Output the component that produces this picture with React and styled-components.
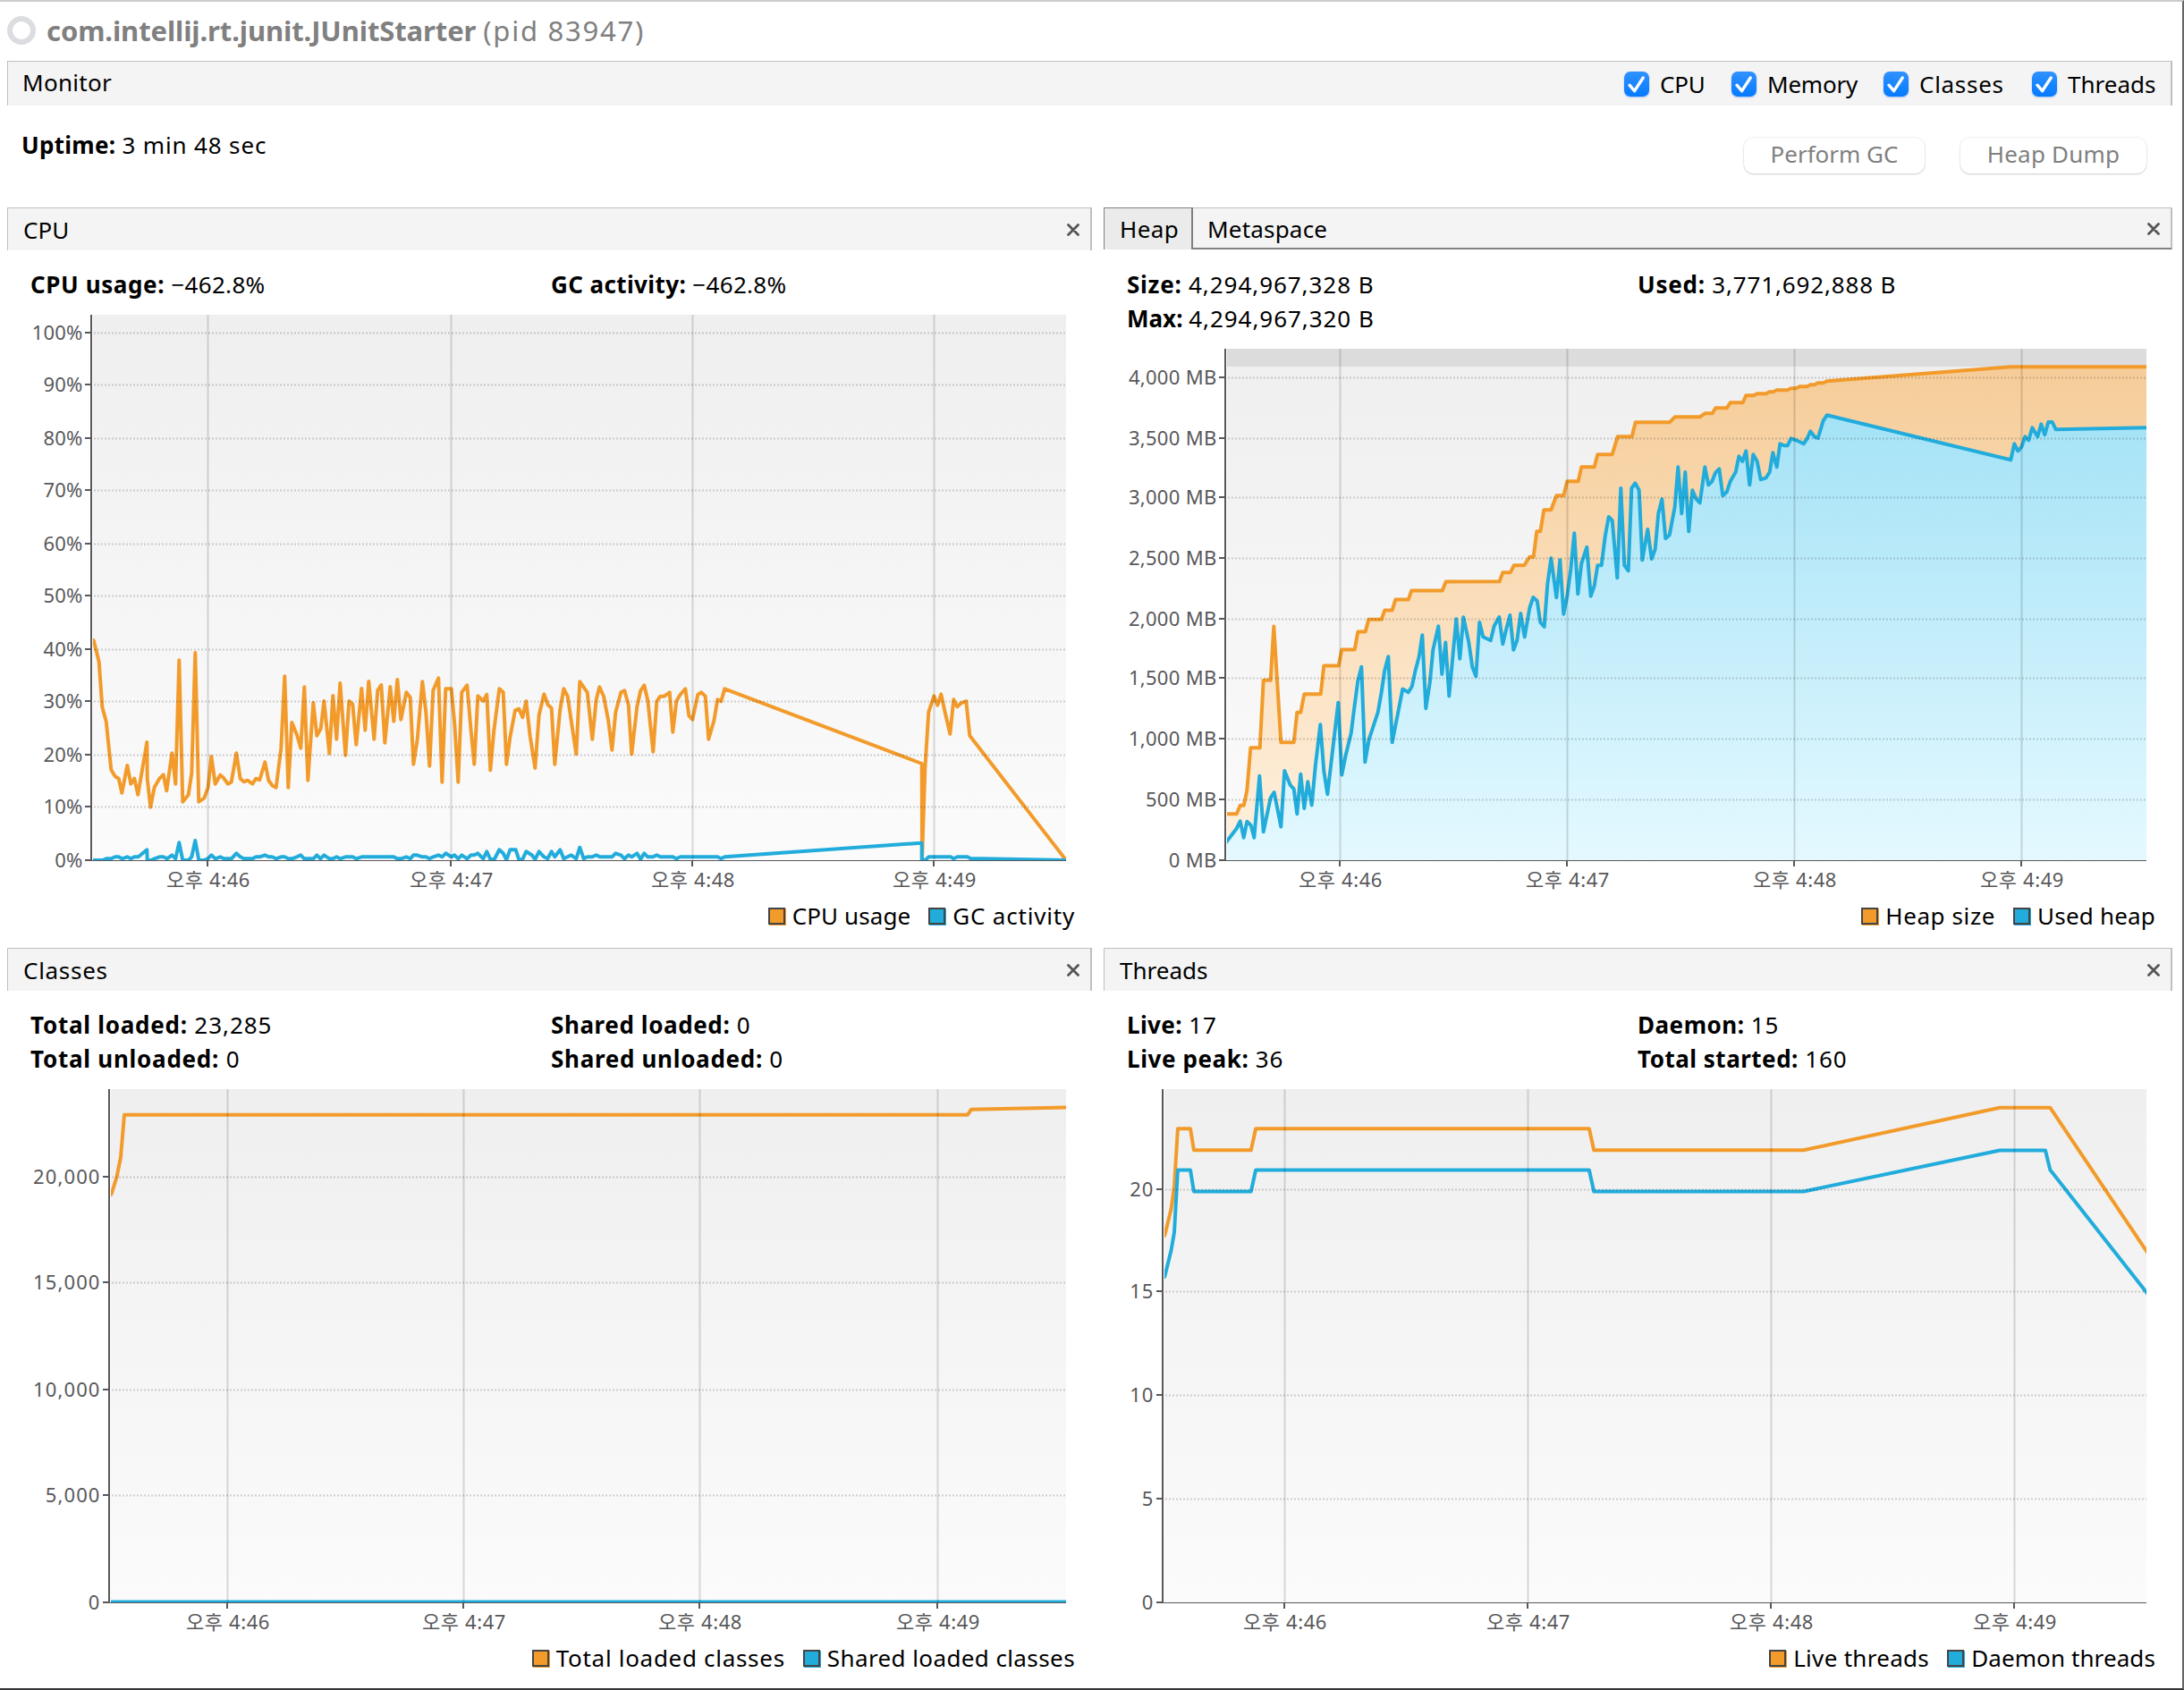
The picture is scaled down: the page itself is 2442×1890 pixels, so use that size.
import React from 'react'
import styled, { createGlobalStyle } from 'styled-components'

const ORANGE = '#f29b2b'
const BLUE = '#22acdb'

const GlobalStyle = createGlobalStyle`
  * {
    box-sizing: border-box;
  }

  body {
    margin: 0;
    background: #ffffff;
    color: #000000;
    font-family: 'Noto Sans', 'Noto Sans CJK KR', sans-serif;
    font-size: 26px;
  }
`

const Window = styled.div`
  width: 2442px;
  height: 1890px;
  overflow: hidden;
  border-top: 2px solid #cccccc;
  border-right: 2px solid #666666;
  border-bottom: 2px solid #333335;
  padding-left: 8px;
`

const Text = styled.span`
  letter-spacing: ${props => props.$track || 0}px;
  font-weight: ${props => (props.$bold ? 700 : 400)};
  white-space: pre;
`

const TitleBar = styled.header`
  display: flex;
  align-items: center;
  height: 66px;
  padding-bottom: 2px;
  color: #808080;
  font-size: 31px;
`

const StatusRing = styled.div`
  width: 32px;
  height: 32px;
  margin-right: 12px;
  border: 6px solid #dcdde1;
  border-radius: 50%;
`

const MonitorBar = styled.div`
  display: flex;
  justify-content: space-between;
  align-items: center;
  width: 2421px;
  height: 50px;
  padding: 0 17px 0 16px;
  border: solid #bfbfbf;
  border-width: 1px 2px 0 1px;
  background: #f4f4f4;
`

const MonitorTitle = styled.div`
  padding-bottom: 3px;
`

const CheckGroup = styled.div`
  display: flex;
`

const CheckLabel = styled.label`
  display: flex;
  align-items: center;
  width: ${props => props.$width}px;
`

const CheckBox = styled.span`
  display: flex;
  width: 28px;
  height: 28px;
  margin-right: 12px;
  border-radius: 7px;
  background: linear-gradient(#2f92ff, #057aff);
  box-shadow: 0 1px 2px rgba(0, 90, 220, 0.35);
`

const Overview = styled.div`
  display: flex;
  justify-content: space-between;
  width: 2392px;
  height: 114px;
  padding-left: 16px;
`

const Uptime = styled.div`
  padding-top: 25px;
  line-height: 38px;
`

const Buttons = styled.div`
  display: flex;
  gap: 40px;
  padding-top: 36px;
`

const Button = styled.button`
  width: ${props => props.$width}px;
  height: 40px;
  padding: 0 0 4px;
  border: 0;
  border-radius: 11px;
  background: #ffffff;
  box-shadow: 0 0 1px 1px rgba(0, 0, 0, 0.05), 0 1px 2px rgba(0, 0, 0, 0.16);
  color: #808080;
  font: inherit;
  line-height: 36px;
`

const Panels = styled.main`
  display: grid;
  grid-template-columns: 1213px 1195px;
  grid-template-rows: 828px 828px;
  column-gap: 13px;
`

const PanelBox = styled.section`
  display: flex;
  flex-direction: column;
`

const PanelHead = styled.div`
  display: flex;
  height: ${props => (props.$tabs ? 47 : 48)}px;
  margin-bottom: ${props => (props.$tabs ? 1 : 0)}px;
  background: #f4f4f4;
`

const Tab = styled.div`
  display: flex;
  align-items: center;
  width: ${props => props.$width}px;
  padding: 0 0 0 17px;
  border: solid #808080;
  border-width: 1px 2px 0 1px;
  background: #ebebeb;
`

const HeadBar = styled.div`
  display: flex;
  flex: 1;
  justify-content: space-between;
  align-items: center;
  padding: ${props => (props.$tabs ? '2px 12px 0 16px' : '0 12px 0 17px')};
  border: solid #bfbfbf;
  border-width: 1px 2px 0 1px;
  ${props => props.$tabs && `
    border-left: 0;
    border-bottom: 2px solid #808080;
  `}
`

const Info = styled.div`
  display: grid;
  grid-template-columns: ${props => props.$column}px auto;
  align-content: start;
  height: ${props => props.$height}px;
  padding: 19px 0 0 26px;
  line-height: 38px;
`

const Plot = styled.svg`
  display: block;
`

const Legend = styled.div`
  display: flex;
  justify-content: flex-end;
  gap: 20px;
  padding: 4px 19px 0 0;
  line-height: 36px;
`

const LegendItem = styled.div`
  display: flex;
  align-items: center;
`

const Swatch = styled.span`
  width: 19px;
  height: 19px;
  margin-right: 8px;
  border: 2px solid #444444;
  background: ${props => props.$color};
  box-shadow: 1px 1px 0 ${props => props.$color};
`

const CheckMark = () => (
  <svg width="28" height="28" viewBox="0 0 28 28">
    <path d="M6 15.2 L11.6 21.6 L21.2 7" fill="none" stroke="#fff" strokeWidth="3.4" strokeLinecap="round" strokeLinejoin="round" />
  </svg>
)

const CloseIcon = () => (
  <svg width="14" height="14" viewBox="0 0 14 14">
    <path d="M1.5 1.5 L12.5 12.5 M12.5 1.5 L1.5 12.5" stroke="#555" strokeWidth="2.8" strokeLinecap="round" />
  </svg>
)

// Samples are kept in chunks; each chunk has its own origin and scale.
const chunk = (ox, oy, kx, ky, samples) =>
  samples.trim().split(/\s+/).map(pair => {
    const [x, y] = pair.split(',').map(Number)
    return `${(ox + x / kx).toFixed(1)},${(oy + y / ky).toFixed(1)}`
  }).join(' ')

const cpuUsage = [
  chunk(80, 680, 3, 3, `74,108 92,181 103,332 116,380 133,543 146,565 158,572 169,620 187,528 199,590 211,572 223,626
    241,520 253,450 254,572 265,668 278,601 295,572 308,559 319,613 337,487 349,590 361,175 373,650 392,626 403,554
    415,150 427,650 445,638 458,601 469,498 482,590 499,560 511,571 524,590 536,584 553,487 566,572 578,583 590,578
    607,590 619,572 631,577 649,517 661,578 674,596 686,602 703,470 715,229 727,602 739,384 756,425 769,470 781,265
    793,578 811,318 823,428 836,404 847,312 865,488 877,294 889,440 901,252 919,494 931,312 943,323 955,458 973,270
    985,410 997,246 1015,440 1027,276 1039,258 1051,452 1069,264 1081,380`),
  chunk(440, 700, 3, 3, `13,180 25,314 43,223 56,240 67,464 80,380 97,187 109,290 121,470 133,216 151,175 163,524
    175,211 194,211 205,330 217,524 229,223 247,199 259,340 271,464 283,235 301,252 313,230 325,484 337,350 355,211
    368,223 379,464 391,374 408,283 421,278 433,307 445,253 458,370 475,477 488,299 505,229 518,265 530,276 541,464
    559,280 571,211 584,236 601,350 613,430 625,187 650,223 667,380 680,247 691,205 705,236 721,320 733,416 745,290
    763,223 775,217 788,265 799,430 817,270 829,217 841,199 853,250 871,422 883,253 895,236 908,236 926,223 937,356
    949,252 962,230 979,211 991,301 1003,314 1021,230 1033,223 1046,236 1057,380 1075,318 1087,247 1099,253 1111,211`),
  chunk(820, 700, 3, 3, `632,462 633,785 643,480 655,289 673,235 685,266 697,229 709,285 727,362 739,247 751,271
    764,259 781,252 793,368 1114,783`)
].join(' ')

const gcActivity = [
  chunk(80, 680, 3, 3, `72,846 105,846 116,841 133,841 146,835 158,835 169,841 187,835 199,841 211,835 224,835 253,811
    254,847 266,846 278,841 295,835 308,835 320,841 337,829 349,841 361,787 373,846 392,846 403,835 415,780 427,846
    445,846 457,841 469,829 482,841 499,835 511,841 536,841 553,823 566,835 578,841 607,841 619,835 631,835 649,829
    661,835 673,835 686,841 703,835 715,835 727,841 739,841 756,835 769,829 781,841 811,841 823,829 835,841 847,829
    865,841 877,841 889,835 901,841 919,835 943,835 955,841 973,835 1081,835`),
  chunk(440, 700, 3, 3, `12,781 25,781 43,775 56,781 67,769 79,769 97,775 109,775 121,781 133,775 151,769 163,775
    175,763 194,775 205,769 217,781 229,769 247,781 260,769 271,769 283,763 301,781 313,757 325,783 338,783 355,751
    368,763 379,785 391,751 410,751 421,785 433,783 445,757 464,769 475,783 488,757 505,775 517,781 530,757 541,775
    559,751 571,781 596,769 613,781 625,743 638,781 650,775 667,775 680,769 692,775 733,775 745,763 763,769 775,781
    788,769 799,775 817,763 829,783 841,763 853,775 871,775 883,769 895,775 937,775 949,781 962,775 1087,775
    1099,781 1111,775`),
  chunk(820, 700, 3, 3, `632,728 632,785 645,785 655,775 730,775 739,781 751,775 785,775 795,780 1118,786`)
].join(' ')

const heapSize = [
  chunk(1220, 380, 3, 2.45, `452,1299 488,1299 500,1276 512,1276 523,1235 535,1118 566,1118 578,933 602,933 613,785
    637,1103 680,1103 691,1021 703,1021 715,971 770,971 781,893 830,893 841,849 884,849 895,800 920,800 931,766
    974,766 985,741 1010,741 1021,712 1064,712 1075,687 1178,687 1190,663`),
  chunk(1640, 380, 3, 3, `110,811 121,781 146,781 158,757 193,757 211,728 224,728 235,643 247,643 259,571 283,571
    301,523 325,523 337,475 374,475 385,427 428,427 439,385 488,385 506,325 554,325 566,277 680,277 698,259 782,259
    799,247 824,247 835,229 872,229 884,211 926,211 937,187 962,187 974,181 1004,181 1015,175 1028,175 1040,169
    1076,169 1088,163 1105,163 1117,157 1142,157 1153,151 1166,151 1178,145 1196,145 1208,139`),
  chunk(2040, 380, 3, 3, '625,91 1084,91')
].join(' ')

const usedHeap = [
  chunk(1220, 380, 3, 2.45, `452,1378 488,1339 500,1319 512,1364 523,1320 536,1330 547,1364 565,1195 578,1348 602,1255
    614,1240 637,1334 649,1181 668,1220 680,1231 691,1299 703,1190 715,1284 727,1211 740,1275 752,1170 769,1054
    781,1182 793,1245 829,994 841,1192 854,1138 872,1078 884,1000 895,935 907,896 919,1157 932,1095 962,1021 974,965
    985,905 997,868 1010,1103 1030,1020 1045,957 1064,966 1076,950 1088,905 1100,868 1111,809 1123,1010 1136,940
    1147,850 1165,785 1177,916 1189,829 1201,976 1213,870 1225,765 1237,874 1249,760 1267,829 1279,897 1291,922`),
  chunk(1640, 380, 3, 3, `43,948 55,997 80,1009 92,960 109,930 121,1021 133,970 145,924 157,1040 169,1009 181,918
    194,997 211,900 223,864 236,876 247,948 260,963 271,820 283,733 301,865 313,739 325,920 337,860 349,770 361,649
    373,853 385,750 403,696 416,860 428,825 439,757 452,757 464,660 476,594 488,606 505,799 517,498 529,757 542,775
    553,498 565,481 578,505 589,739 607,636 620,735 632,703 643,582 655,535 667,667 680,655 698,560 709,427 721,583
    733,444 745,643 757,505 770,535 782,547 799,427 811,487 823,475 835,445 847,433 859,523 872,511 884,475 902,444
    913,391 925,408 937,373 949,487 961,385 974,408 986,469 1004,463 1016,444 1027,379 1040,427 1051,349 1064,355
    1076,355 1088,331 1105,337 1130,349 1142,331 1153,307 1166,325 1178,330 1196,271 1208,253`),
  chunk(2040, 380, 3, 3, `625,403 637,349 649,373 661,360 673,325 685,337 697,295 715,325 727,283 739,319 751,276
    764,276 776,301 1084,295`)
].join(' ')

const totalClasses = '124,1336 125,1334 130.6,1316 135,1294 139,1246.7 1082,1246.7 1086,1240.7 1195,1238.5'
const sharedClasses = '122,1791.5 1195,1791.5'

const liveThreads = `1302,1382 1302.7,1380 1309.6,1351.7 1313,1326.7 1316.9,1262.3 1331,1262.3 1334.9,1286.3
  1398.8,1286.3 1404.1,1262.3 1776.9,1262.3 1782.2,1286.3 2016.7,1286.3 2236,1238.7 2292.3,1238.7 2404,1405`
const daemonThreads = `1302,1428 1302.7,1426 1309.6,1398 1313,1378 1316.9,1308.5 1331,1308.5 1334.9,1332.5
  1398.8,1332.5 1404.1,1308.5 1776.9,1308.5 1782.2,1332.5 2016.7,1332.5 2236,1286.5 2287,1286.5 2292.3,1308.3
  2404,1450.4`

const Chart = ({ id, left, width, axis, right, top, bottom, yTicks, xTicks, series, area, limit, track }) => (
  <Plot width={width} height={bottom - top + 40} viewBox={`${left} ${top} ${width} ${bottom - top + 40}`}>
    <defs>
      <linearGradient id={`${id}-bg`} x1="0" y1="0" x2="0" y2="1">
        <stop offset="0" stopColor="#efefef" />
        <stop offset="1" stopColor="#fbfbfb" />
      </linearGradient>
      <linearGradient id={`${id}-0`} gradientUnits="userSpaceOnUse" x1="0" y1={top} x2="0" y2={bottom}>
        <stop offset="0" stopColor="#f5cb96" />
        <stop offset="1" stopColor="#fff1df" />
      </linearGradient>
      <linearGradient id={`${id}-1`} gradientUnits="userSpaceOnUse" x1="0" y1={top} x2="0" y2={bottom}>
        <stop offset="0" stopColor="#9bdff5" />
        <stop offset="1" stopColor="#e4f9ff" />
      </linearGradient>
      <clipPath id={`${id}-clip`}>
        <rect x={axis + 2} y={top} width={right - axis - 2} height={bottom - top + 1} />
      </clipPath>
    </defs>
    <rect x={axis + 2} y={top} width={right - axis - 2} height={bottom - top} fill={`url(#${id}-bg)`} />
    {limit && <rect x={axis + 2} y={top} width={right - axis - 2} height={limit} fill="#dcdcdc" />}
    <g clipPath={`url(#${id}-clip)`}>
      {series.map((points, i) => (
        <g key={i}>
          {area && <polygon points={`${points} ${right + 4},${bottom + 4} ${axis},${bottom + 4}`} fill={`url(#${id}-${i})`} />}
          <polyline
            points={points}
            fill="none"
            stroke={i === 0 ? ORANGE : BLUE}
            strokeWidth="4"
            strokeLinecap="round"
            strokeLinejoin="round"
          />
        </g>
      ))}
      {yTicks.filter(([y]) => y < bottom).map(([y]) => (
        <path key={y} d={`M${axis + 3} ${y + 0.5} H${right}`} stroke="#000" strokeOpacity="0.17" strokeWidth="2" strokeDasharray="2 2" />
      ))}
      {xTicks.map(x => (
        <path key={x} d={`M${x + 0.5} ${top} V${bottom}`} stroke="#000" strokeOpacity="0.14" strokeWidth="2" />
      ))}
    </g>
    <path d={`M${axis} ${top} V${bottom + 1}`} stroke="#58585a" strokeWidth="2" />
    <path d={`M${axis} ${bottom + 0.5} H${right}`} stroke="#58585a" />
    {yTicks.map(([y, label]) => (
      <g key={y}>
        <path d={`M${axis - 7} ${y} H${axis}`} stroke="#58585a" strokeWidth="2" />
        <text x={axis - 9.5} y={y + 8} fontSize="22" letterSpacing={track} textAnchor="end" fill="#58585a">{label}</text>
      </g>
    ))}
    {xTicks.map((x, i) => (
      <g key={x}>
        <path d={`M${x} ${bottom} V${bottom + 7}`} stroke="#58585a" strokeWidth="2" />
        <text x={x + 1} y={bottom + 29.5} fontSize="22" letterSpacing="0.6" textAnchor="middle" fill="#58585a">
          {`오후 4:${46 + i}`}
        </text>
      </g>
    ))}
  </Plot>
)

const Fact = ({ name, value, nameTrack = 0.75, track = 0.95 }) => (
  <div>
    <Text $bold $track={nameTrack}>{name}: </Text>
    <Text $track={track}>{value}</Text>
  </div>
)

const Panel = ({ title, titleTrack, tab, infoHeight, column, facts, legend, chart }) => (
  <PanelBox>
    <PanelHead $tabs={!!tab}>
      {tab && <Tab $width={100}><Text $track={0.4}>{tab}</Text></Tab>}
      <HeadBar $tabs={!!tab}>
        <Text $track={titleTrack}>{title}</Text>
        <CloseIcon />
      </HeadBar>
    </PanelHead>
    <Info $height={infoHeight} $column={column}>
      {facts.map(fact => <Fact key={fact.name} {...fact} />)}
    </Info>
    <Chart {...chart} />
    <Legend>
      {legend.map(([label, track], i) => (
        <LegendItem key={label}>
          <Swatch $color={i === 0 ? ORANGE : BLUE} />
          <Text $track={track}>{label}</Text>
        </LegendItem>
      ))}
    </Legend>
  </PanelBox>
)

const checks = [
  { label: 'CPU', width: 120, track: -0.2 },
  { label: 'Memory', width: 170, track: -0.2 },
  { label: 'Classes', width: 166, track: 0.7 },
  { label: 'Threads', width: 138, track: 0 }
]

const panels = [
  {
    title: 'CPU',
    infoHeight: 72,
    column: 582,
    facts: [
      { name: 'CPU usage', value: '−462.8%', nameTrack: 0.6, track: 0.3 },
      { name: 'GC activity', value: '−462.8%', nameTrack: 0.4, track: 0.3 }
    ],
    legend: [['CPU usage', 0.1], ['GC activity', 0.8]],
    chart: {
      id: 'cpu', left: 8, width: 1213, axis: 102, right: 1192, top: 352, bottom: 962, track: 0.2,
      yTicks: [
        [372, '100%'], [430, '90%'], [490, '80%'], [548, '70%'], [608, '60%'], [666, '50%'],
        [726, '40%'], [784, '30%'], [844, '20%'], [902, '10%'], [962, '0%']
      ],
      xTicks: [232, 504, 774, 1044],
      series: [cpuUsage, gcActivity]
    }
  },
  {
    tab: 'Heap',
    title: 'Metaspace',
    titleTrack: 0.2,
    infoHeight: 110,
    column: 571,
    facts: [
      { name: 'Size', value: '4,294,967,328 B' },
      { name: 'Used', value: '3,771,692,888 B', track: 0.85 },
      { name: 'Max', value: '4,294,967,320 B', nameTrack: 0 }
    ],
    legend: [['Heap size', 0.6], ['Used heap', 0.2]],
    chart: {
      id: 'heap', left: 1234, width: 1195, axis: 1370, right: 2400, top: 390, bottom: 962, track: 0.3,
      area: true,
      limit: 20,
      yTicks: [
        [422, '4,000 MB'], [490, '3,500 MB'], [556, '3,000 MB'], [624, '2,500 MB'], [692, '2,000 MB'],
        [758, '1,500 MB'], [826, '1,000 MB'], [894, '500 MB'], [962, '0 MB']
      ],
      xTicks: [1498, 1752, 2006, 2260],
      series: [heapSize, usedHeap]
    }
  },
  {
    title: 'Classes',
    titleTrack: 0.7,
    infoHeight: 110,
    column: 582,
    facts: [
      { name: 'Total loaded', value: '23,285' },
      { name: 'Shared loaded', value: '0', nameTrack: 0.6 },
      { name: 'Total unloaded', value: '0' },
      { name: 'Shared unloaded', value: '0', nameTrack: 0.7 }
    ],
    legend: [['Total loaded classes', 0.7], ['Shared loaded classes', 0.4]],
    chart: {
      id: 'classes', left: 8, width: 1213, axis: 122, right: 1192, top: 1218, bottom: 1792, track: 1.1,
      yTicks: [[1316, '20,000'], [1434, '15,000'], [1554, '10,000'], [1672, '5,000'], [1792, '0']],
      xTicks: [254, 518, 782, 1048],
      series: [totalClasses, sharedClasses]
    }
  },
  {
    title: 'Threads',
    infoHeight: 110,
    column: 571,
    facts: [
      { name: 'Live', value: '17', nameTrack: 0.4 },
      { name: 'Daemon', value: '15', nameTrack: 0.5 },
      { name: 'Live peak', value: '36', nameTrack: 0.6 },
      { name: 'Total started', value: '160', nameTrack: 0.5 }
    ],
    legend: [['Live threads', 0.3], ['Daemon threads', 0.1]],
    chart: {
      id: 'threads', left: 1234, width: 1195, axis: 1300, right: 2400, top: 1218, bottom: 1792, track: 1.1,
      yTicks: [[1330, '20'], [1444, '15'], [1560, '10'], [1676, '5'], [1792, '0']],
      xTicks: [1436, 1708, 1980, 2252],
      series: [liveThreads, daemonThreads]
    }
  }
]

const App = () => {
  return (
    <>
      <GlobalStyle />
      <Window>
        <TitleBar>
          <StatusRing />
          <Text $bold $track={-0.1}>com.intellij.rt.junit.JUnitStarter </Text>
          <Text $track={1.75}>(pid 83947)</Text>
        </TitleBar>
        <MonitorBar>
          <MonitorTitle><Text $track={0.3}>Monitor</Text></MonitorTitle>
          <CheckGroup>
            {checks.map(({ label, width, track }) => (
              <CheckLabel key={label} $width={width}>
                <CheckBox><CheckMark /></CheckBox>
                <Text $track={track}>{label}</Text>
              </CheckLabel>
            ))}
          </CheckGroup>
        </MonitorBar>
        <Overview>
          <Uptime>
            <Text $bold $track={0.3}>Uptime: </Text>
            <Text $track={0.85}>3 min 48 sec</Text>
          </Uptime>
          <Buttons>
            <Button $width={202}><Text>Perform GC</Text></Button>
            <Button $width={208}><Text $track={0.2}>Heap Dump</Text></Button>
          </Buttons>
        </Overview>
        <Panels>
          {panels.map(panel => <Panel key={panel.id || panel.title} {...panel} />)}
        </Panels>
      </Window>
    </>
  )
}

export default App
